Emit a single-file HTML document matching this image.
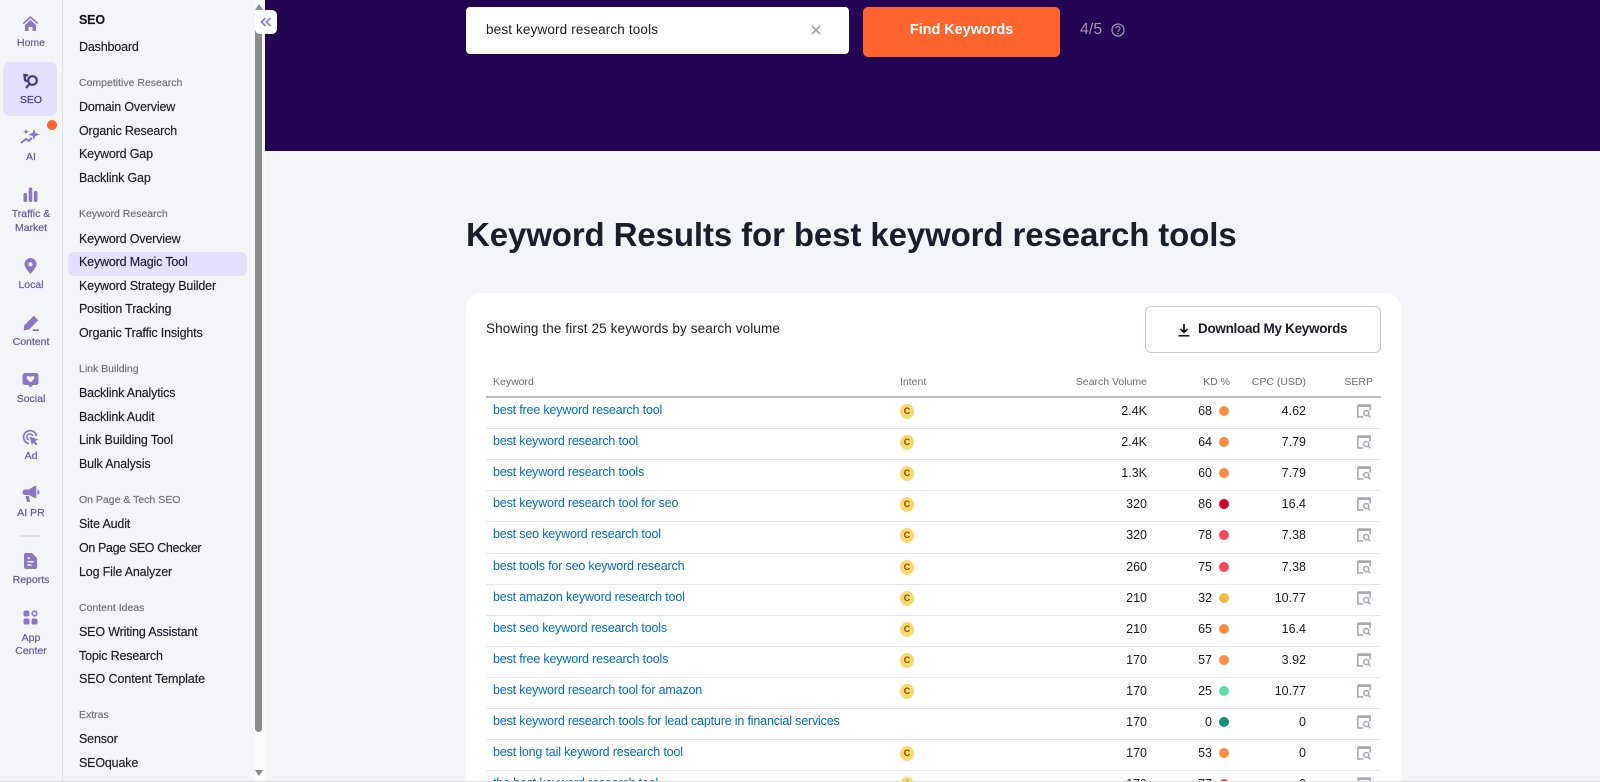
<!DOCTYPE html>
<html lang="en"><head><meta charset="utf-8"><title>Keyword Results</title>
<style>
html,body{margin:0;padding:0;width:1600px;height:782px;overflow:hidden;background:#f4f5f9;font-family:"Liberation Sans",sans-serif;color:#1b1d26}
div,span,svg{position:absolute;box-sizing:border-box}
#w{left:0;top:0;width:1600px;height:782px;overflow:hidden}
.rail{left:0;top:0;width:63px;height:781px;border-right:1px solid #e0e1e9;background:#f4f5f9}
.rl{left:0;width:62px;text-align:center;font-size:10.5px;line-height:13px;color:#6a5aa3;white-space:nowrap;-webkit-text-stroke:.2px #6a5aa3}
.n{left:79px;font-size:12.5px;line-height:20px;color:#1b1d26;white-space:nowrap;letter-spacing:-.17px;-webkit-text-stroke:.15px #1b1d26}
.g{left:79px;font-size:10.5px;line-height:16px;color:#6c6e79;white-space:nowrap;-webkit-text-stroke:.15px #6c6e79}
.row{left:486px;width:895px;height:31px;border-top:1px solid #e4e5ec}
.row .k{left:7px;top:2px;font-size:12.5px;line-height:20px;color:#006dca;white-space:nowrap;letter-spacing:-.17px}
.row .c{left:414px;top:6px;width:14px;height:15px;border-radius:50%;background:#fbd86d;color:#8a4b00;font-size:9px;font-weight:bold;line-height:15px;text-align:center}
.row .v{right:234px;top:3px;font-size:12.5px;line-height:20px;white-space:nowrap}
.row .d{right:169px;top:3px;font-size:12.5px;line-height:20px;white-space:nowrap}
.row .o{left:733px;top:8px;width:10px;height:10px;border-radius:50%}
.row .p{right:75px;top:3px;font-size:12.5px;line-height:20px;white-space:nowrap}
.row svg{left:871px;top:6px;width:14px;height:14px}
.h{top:374px;font-size:10.5px;line-height:16px;color:#6c6e79;white-space:nowrap}
.i{fill:#8b77c6}
</style></head><body>
<div id="w">
<svg width="0" height="0" style="left:0;top:0"><symbol id="s" viewBox="0 0 13 13"><path d="M.8 1h11.400v5M.8 1v11h5" fill="none" stroke="#a8a9b6" stroke-width="1.500"/><path d="M.8 1.800h11.400" stroke="#a8a9b6" stroke-width="2"/><circle cx="8.600" cy="8.400" r="2.400" fill="none" stroke="#a8a9b6" stroke-width="1.400"/><path d="M10.300 10.200l2 2" stroke="#a8a9b6" stroke-width="1.500"/></symbol></svg>

<!-- main header -->
<div style="left:265px;top:0;width:1335px;height:151px;background:#240554"></div>
<div style="left:466px;top:7px;width:383px;height:47px;background:#fff;border-radius:4px"></div>
<span style="left:486px;top:20px;font-size:13.5px;line-height:20px;letter-spacing:.15px;color:#1b1d26;white-space:nowrap">best keyword research tools</span>
<svg style="left:811px;top:25px" width="10" height="10" viewBox="0 0 10 10"><path d="M1 1l8 8M9 1l-8 8" stroke="#a3a4b0" stroke-width="1.700"/></svg>
<div style="left:863px;top:7px;width:197px;height:50px;background:#ff642d;border-radius:5px;color:#fff;font-size:14.5px;font-weight:bold;line-height:47px;text-align:center;letter-spacing:-.05px">Find Keywords</div>
<span style="left:1080px;top:20px;font-size:16px;line-height:20px;color:#9d96ae;white-space:nowrap">4/5</span>
<svg style="left:1111px;top:23px" width="14" height="14" viewBox="0 0 14 14"><circle cx="7" cy="7" r="6" fill="none" stroke="#9d96ae" stroke-width="1.300"/><path d="M5 5.400a2 2 0 1 1 3 1.800c-.7.4-1 .8-1 1.500" fill="none" stroke="#9d96ae" stroke-width="1.200"/><circle cx="7" cy="10.500" r=".8" fill="#9d96ae"/></svg>

<!-- title -->
<div style="left:466px;top:212px;font-size:33px;font-weight:bold;line-height:46px;letter-spacing:-.11px;color:#181e2b;white-space:nowrap">Keyword Results for best keyword research tools</div>

<!-- card -->
<div style="left:466px;top:293px;width:935px;height:500px;background:#fff;border-radius:16px"></div>
<span style="left:486px;top:319px;font-size:13.5px;line-height:20px;letter-spacing:.11px;color:#1b1d26;white-space:nowrap">Showing the first 25 keywords by search volume</span>
<div style="left:1145px;top:306px;width:236px;height:47px;border:1px solid #c9cad6;border-radius:6px;background:#fff"></div>
<svg style="left:1177px;top:323px" width="14" height="14" viewBox="0 0 14 14"><path d="M7 1v8M3.600 6L7 9.400 10.400 6" fill="none" stroke="#1b1d26" stroke-width="1.800"/><path d="M1.500 12.800h11" stroke="#1b1d26" stroke-width="1.600"/></svg>
<span style="left:1198px;top:319px;font-size:13.5px;font-weight:bold;line-height:20px;letter-spacing:-.3px;color:#1b1d26;white-space:nowrap">Download My Keywords</span>

<span class="h" style="left:493px">Keyword</span>
<span class="h" style="left:900px">Intent</span>
<span class="h" style="right:453px">Search Volume</span>
<span class="h" style="right:370px">KD %</span>
<span class="h" style="right:294px">CPC (USD)</span>
<span class="h" style="right:227px">SERP</span>

<div class="row" style="top:396px;border-top:2px solid #b9bac6"><span class="k">best free keyword research tool</span><span class="c">C</span><span class="v">2.4K</span><span class="d">68</span><span class="o" style="background:#ff8c43"></span><span class="p">4.62</span><svg><use href="#s"/></svg></div>
<div class="row" style="top:428px"><span class="k">best keyword research tool</span><span class="c">C</span><span class="v">2.4K</span><span class="d">64</span><span class="o" style="background:#ff8c43"></span><span class="p">7.79</span><svg><use href="#s"/></svg></div>
<div class="row" style="top:459px"><span class="k">best keyword research tools</span><span class="c">C</span><span class="v">1.3K</span><span class="d">60</span><span class="o" style="background:#ff8c43"></span><span class="p">7.79</span><svg><use href="#s"/></svg></div>
<div class="row" style="top:490px"><span class="k">best keyword research tool for seo</span><span class="c">C</span><span class="v">320</span><span class="d">86</span><span class="o" style="background:#d1002f"></span><span class="p">16.4</span><svg><use href="#s"/></svg></div>
<div class="row" style="top:521px"><span class="k">best seo keyword research tool</span><span class="c">C</span><span class="v">320</span><span class="d">78</span><span class="o" style="background:#ff4953"></span><span class="p">7.38</span><svg><use href="#s"/></svg></div>
<div class="row" style="top:553px"><span class="k">best tools for seo keyword research</span><span class="c">C</span><span class="v">260</span><span class="d">75</span><span class="o" style="background:#ff4953"></span><span class="p">7.38</span><svg><use href="#s"/></svg></div>
<div class="row" style="top:584px"><span class="k">best amazon keyword research tool</span><span class="c">C</span><span class="v">210</span><span class="d">32</span><span class="o" style="background:#fcb73f"></span><span class="p">10.77</span><svg><use href="#s"/></svg></div>
<div class="row" style="top:615px"><span class="k">best seo keyword research tools</span><span class="c">C</span><span class="v">210</span><span class="d">65</span><span class="o" style="background:#ff8c43"></span><span class="p">16.4</span><svg><use href="#s"/></svg></div>
<div class="row" style="top:646px"><span class="k">best free keyword research tools</span><span class="c">C</span><span class="v">170</span><span class="d">57</span><span class="o" style="background:#ff8c43"></span><span class="p">3.92</span><svg><use href="#s"/></svg></div>
<div class="row" style="top:677px"><span class="k">best keyword research tool for amazon</span><span class="c">C</span><span class="v">170</span><span class="d">25</span><span class="o" style="background:#59ddaa"></span><span class="p">10.77</span><svg><use href="#s"/></svg></div>
<div class="row" style="top:708px"><span class="k">best keyword research tools for lead capture in financial services</span><span class="v">170</span><span class="d">0</span><span class="o" style="background:#12906f"></span><span class="p">0</span><svg><use href="#s"/></svg></div>
<div class="row" style="top:739px"><span class="k">best long tail keyword research tool</span><span class="c">C</span><span class="v">170</span><span class="d">53</span><span class="o" style="background:#ff8c43"></span><span class="p">0</span><svg><use href="#s"/></svg></div>
<div class="row" style="top:770px"><span class="k">the best keyword research tool</span><span class="c">C</span><span class="v">170</span><span class="d">77</span><span class="o" style="background:#ff4953"></span><span class="p">0</span><svg><use href="#s"/></svg></div>

<!-- sub nav panel -->
<div style="left:63px;top:0;width:192px;height:781px;background:#f4f5f9"></div>
<div style="left:68px;top:252px;width:179px;height:24px;background:#e3dffd;border-radius:6px"></div>
<span class="n" style="top:10px;font-weight:bold;color:#111">SEO</span>
<span class="n" style="top:37px">Dashboard</span>
<span class="g" style="top:75px">Competitive Research</span>
<span class="n" style="top:97px">Domain Overview</span>
<span class="n" style="top:121px">Organic Research</span>
<span class="n" style="top:144px">Keyword Gap</span>
<span class="n" style="top:168px">Backlink Gap</span>
<span class="g" style="top:206px">Keyword Research</span>
<span class="n" style="top:229px">Keyword Overview</span>
<span class="n" style="top:252px">Keyword Magic Tool</span>
<span class="n" style="top:276px">Keyword Strategy Builder</span>
<span class="n" style="top:299px">Position Tracking</span>
<span class="n" style="top:323px">Organic Traffic Insights</span>
<span class="g" style="top:361px">Link Building</span>
<span class="n" style="top:383px">Backlink Analytics</span>
<span class="n" style="top:407px">Backlink Audit</span>
<span class="n" style="top:430px">Link Building Tool</span>
<span class="n" style="top:454px">Bulk Analysis</span>
<span class="g" style="top:492px">On Page &amp; Tech SEO</span>
<span class="n" style="top:514px">Site Audit</span>
<span class="n" style="top:538px;letter-spacing:-.37px">On Page SEO Checker</span>
<span class="n" style="top:562px">Log File Analyzer</span>
<span class="g" style="top:600px">Content Ideas</span>
<span class="n" style="top:622px">SEO Writing Assistant</span>
<span class="n" style="top:646px">Topic Research</span>
<span class="n" style="top:669px;letter-spacing:-.08px">SEO Content Template</span>
<span class="g" style="top:707px">Extras</span>
<span class="n" style="top:729px">Sensor</span>
<span class="n" style="top:753px">SEOquake</span>

<!-- scrollbar -->
<div style="left:255px;top:0;width:10px;height:781px;background:#fbfbfb"></div>
<div style="left:255px;top:14px;width:7px;height:718px;background:#8c8c8c;border-radius:0 0 4px 4px"></div>
<svg style="left:255px;top:4px" width="8" height="6" viewBox="0 0 8 6"><path d="M4 0l4 6H0z" fill="#8c8c8c"/></svg>
<svg style="left:255px;top:770px" width="8" height="6" viewBox="0 0 8 6"><path d="M0 0h8L4 6z" fill="#8c8c8c"/></svg>
<div style="left:255px;top:10px;width:22px;height:24px;background:#fff;border-radius:5px"></div>
<svg style="left:260px;top:17px" width="12" height="10" viewBox="0 0 12 10"><path d="M5.500 1L1.500 5l4 4M10.500 1l-4 4 4 4" fill="none" stroke="#8e86e0" stroke-width="1.900"/></svg>

<!-- rail -->
<div class="rail"></div>
<div style="left:3px;top:62px;width:54px;height:54px;background:#e3dffd;border-radius:7px"></div>
<svg style="left:22px;top:15px" width="17" height="17" viewBox="0 0 17 17"><path class="i" d="M8.500 1L.7 8l1 1.200 6.800-6 6.800 6 1-1.200zM3 10l5.500-5 5.500 5v6h-3.500v-4h-4v4H3z"/></svg>
<span class="rl" style="top:37px">Home</span>
<svg style="left:22px;top:72px" width="18" height="18" viewBox="0 0 18 18"><circle cx="10.500" cy="8.500" r="4.300" fill="none" stroke="#4a3a8c" stroke-width="2.200"/><path d="M7.500 12l-3.500 4" stroke="#4a3a8c" stroke-width="2.200"/><path d="M6 3.500L2.500 3 3 8l2 1.500" fill="none" stroke="#4a3a8c" stroke-width="2.400"/></svg>
<span class="rl" style="top:94px;color:#4a3a8c;-webkit-text-stroke:.2px #4a3a8c">SEO</span>
<svg style="left:20px;top:128px" width="21" height="18" viewBox="0 0 21 18"><path class="i" d="M14 1l1.500 4 4.500 1.500-4.500 1.500L14 12l-1.500-4L8 6.500 12.500 5zM6 1l.8 2L9 3.800 6.800 4.600 6 6.500 5.200 4.600 3 3.800 5.200 3z"/><path d="M1 15l5-4 3 2 3-3" fill="none" stroke="#8b77c6" stroke-width="2"/></svg>
<div style="left:47px;top:120px;width:10px;height:10px;border-radius:50%;background:#ff642d"></div>
<span class="rl" style="top:151px">AI</span>
<svg style="left:23px;top:187px" width="15" height="15" viewBox="0 0 15 15"><rect x="0.500" y="6" width="3.600" height="9" rx="1.500" class="i"/><rect x="5.700" y="0.500" width="3.600" height="14.500" rx="1.500" class="i"/><rect x="10.900" y="4" width="3.600" height="11" rx="1.500" class="i"/></svg>
<span class="rl" style="top:208px">Traffic &amp;</span>
<span class="rl" style="top:222px">Market</span>
<svg style="left:24px;top:258px" width="13" height="16" viewBox="0 0 13 16"><path class="i" fill-rule="evenodd" d="M6.500 0A6 6 0 0 0 .5 6c0 4 6 10 6 10s6-6 6-10a6 6 0 0 0-6-6zm0 4.200a2 2 0 1 1 0 4 2 2 0 0 1 0-4z"/></svg>
<span class="rl" style="top:279px">Local</span>
<svg style="left:22px;top:314px" width="18" height="18" viewBox="0 0 16 16"><path class="i" d="M10.500 1.500l4 4L6 14l-4.500.5L2 10zM9.500 13.500H15v1.700H9.500z"/></svg>
<span class="rl" style="top:336px">Content</span>
<svg style="left:22px;top:372px" width="17" height="16" viewBox="0 0 17 16"><path class="i" fill-rule="evenodd" d="M3 1h11a2.500 2.500 0 0 1 2.500 2.500v7A2.500 2.500 0 0 1 14 13h-3l-2.500 2.500L6 13H3A2.500 2.500 0 0 1 .5 10.500v-7A2.500 2.500 0 0 1 3 1zm5.500 9.500L12 7c1-1.300.2-3-1.300-3-1 0-1.700.5-2.200 1.200C8 4.500 7.300 4 6.300 4 4.800 4 4 5.700 5 7z"/></svg>
<span class="rl" style="top:393px">Social</span>
<svg style="left:22px;top:429px" width="17" height="17" viewBox="0 0 17 17"><path d="M7 14.500A6.500 6.500 0 1 1 14.500 7" fill="none" stroke="#8b77c6" stroke-width="1.800"/><path d="M7 10.800A3 3 0 1 1 10.800 7" fill="none" stroke="#8b77c6" stroke-width="1.600"/><path class="i" d="M7.500 7.500l9 3-3.500 1.500 2.500 3-1.500 1.500-2.800-3-1.200 3z"/></svg>
<span class="rl" style="top:450px">Ad</span>
<svg style="left:22px;top:486px" width="18" height="16" viewBox="0 0 18 16"><path class="i" d="M12.500 0h1.800v12h-1.800L7 9H3a2.500 2.500 0 0 1-2.500-2.500v-.5A2.500 2.500 0 0 1 3 3.500h4zM3.500 10H7l1 6H5zM15.500 3.500c1.300.5 2 1.500 2 2.700s-.7 2.200-2 2.800z"/></svg>
<span class="rl" style="top:507px">AI PR</span>
<div style="left:20px;top:535px;width:20px;height:2px;background:#e0e1e9"></div>
<svg style="left:24px;top:553px" width="13" height="16" viewBox="0 0 13 16"><path class="i" fill-rule="evenodd" d="M2 0h6l5 5v9a2 2 0 0 1-2 2H2a2 2 0 0 1-2-2V2a2 2 0 0 1 2-2zm1.500 8v1.500h6V8zm0 3.200v1.500h4v-1.500zM3.500 4.500V6H6V4.500z"/></svg>
<span class="rl" style="top:574px">Reports</span>
<svg style="left:23px;top:610px" width="15" height="15" viewBox="0 0 15 15"><rect x="0.500" y="0.500" width="6" height="6" rx="1.800" class="i"/><circle cx="11.500" cy="3.500" r="2.300" fill="none" stroke="#8b77c6" stroke-width="1.600"/><rect x="0.500" y="8.500" width="6" height="6" rx="1.800" class="i"/><rect x="8.500" y="8.500" width="6" height="6" rx="1.800" class="i"/></svg>
<span class="rl" style="top:632px">App</span>
<span class="rl" style="top:645px">Center</span>

<div style="left:0;top:781px;width:1600px;height:1px;background:#dcdcdc"></div>
</div>
</body></html>
